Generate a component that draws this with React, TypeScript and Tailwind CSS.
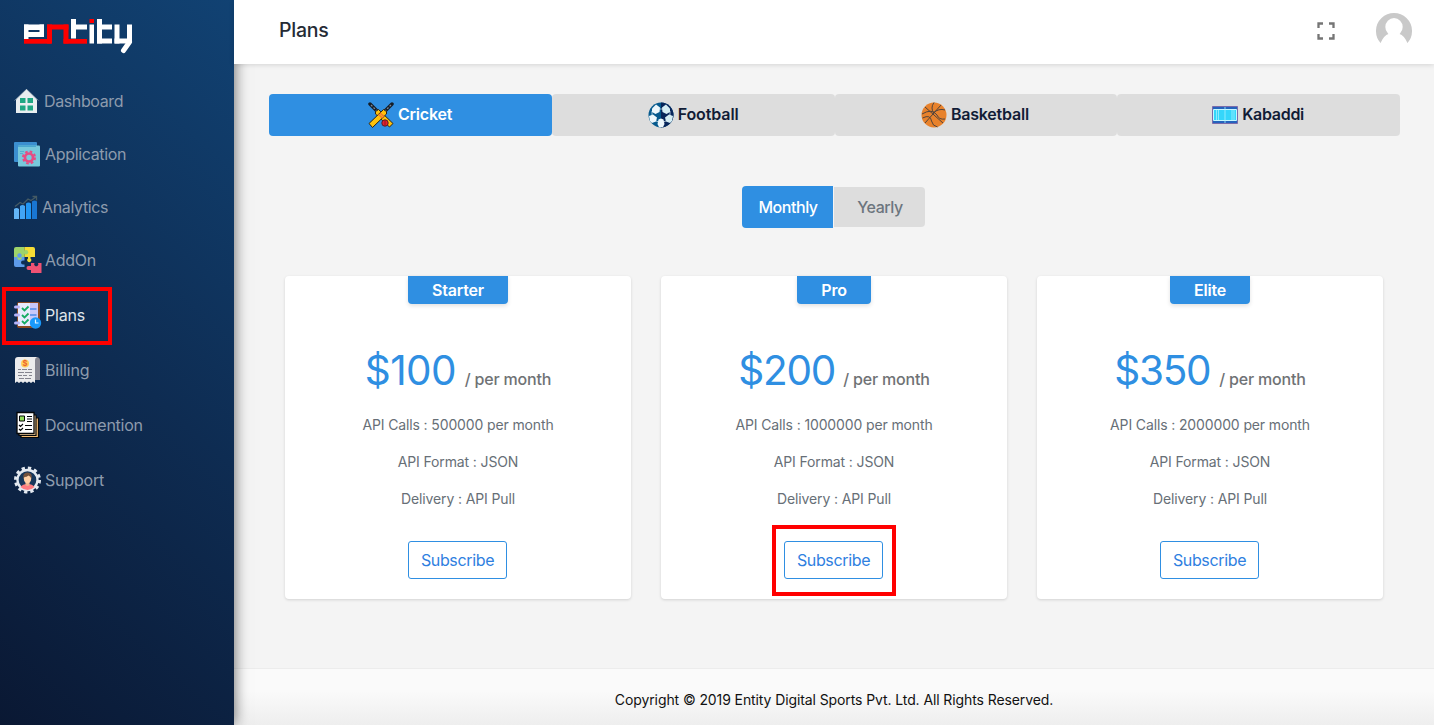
import React from 'react';

function Logo() {
  return (
    <svg width="110" height="36" viewBox="0 0 110 36" role="img" aria-label="entity">
      <g fill="#fff">
        <rect x="0" y="6.500" width="4.500" height="14.500" />
        <rect x="0" y="6.500" width="20" height="5.500" />
        <rect x="15.500" y="6.500" width="4.500" height="12.500" />
        <rect x="4" y="14" width="16" height="5" />
        <rect x="47" y="1" width="5" height="19.500" />
        <rect x="47" y="6.500" width="16" height="5" />
        <rect x="65.500" y="6.500" width="4.500" height="19" />
        <rect x="73" y="1" width="5" height="24.500" />
        <rect x="73" y="6.500" width="15" height="5" />
        <rect x="73" y="20.500" width="15" height="5" />
        <rect x="90.500" y="6.500" width="5" height="19" />
        <rect x="103" y="6.500" width="5" height="18" />
        <rect x="90.500" y="20.500" width="16" height="5" />
      </g>
      <line x1="105.500" y1="24" x2="99.500" y2="32.500" stroke="#fff" strokeWidth="5" strokeLinecap="round" />
      <g fill="#f00">
        <rect x="0" y="21" width="27.500" height="4.700" />
        <rect x="23" y="6.500" width="5" height="19" />
        <rect x="23" y="6.500" width="21.500" height="5" />
        <rect x="39.500" y="6.500" width="5" height="19" />
        <rect x="39.500" y="21" width="23.500" height="4.700" />
        <rect x="65.500" y="1" width="4.500" height="4" />
      </g>
    </svg>
  );
}

const icons: Record<string, React.ReactNode> = {
  Dashboard: (
    <svg width="25" height="26" viewBox="0 0 25 26">
      <path d="M2 11.500 12.500 1 23 11.500V25H2z" fill="#e9eef0" />
      <path d="M.5 12.500 12.500 1.500l12 11" fill="none" stroke="#a9b8c2" strokeWidth=".6" />
      <path d="M6 10h5.500v5H6zM13.500 10H19v5h-5.500zM6 17.500h5.500v5H6zM13.500 17.500H19v5h-5.500z" fill="#1fa883" />
    </svg>
  ),
  Application: (
    <svg width="26" height="26" viewBox="0 0 26 26">
      <rect x="0" y="1" width="23" height="20" rx="1" fill="#3b8fd0" />
      <rect x="4" y="4.500" width="22" height="21" rx="1" fill="#77c9dc" />
      <path d="M4 5.500a1 1 0 0 1 1-1h16a1 1 0 0 1 1 1V6H4z" fill="#4ba8d0" />
      <path d="M6 10.500h4M6 12.500h3" stroke="#4ba8d0" strokeWidth=".8" />
      <circle cx="15" cy="16.500" r="4" fill="none" stroke="#e64c83" strokeWidth="2.700" />
      <circle cx="15" cy="16.500" r="6" fill="none" stroke="#e64c83" strokeWidth="2" strokeDasharray="2.600 2.110" />
    </svg>
  ),
  Analytics: (
    <svg width="24" height="26" viewBox="0 0 24 26">
      <path d="M0 15q2.500-2 5 0v10H0z" fill="#64b5f6" />
      <path d="M6 12q2.500-2 5 0v13H6z" fill="#42a5f5" />
      <path d="M12 9.500q2.500-2 5 0V25h-5z" fill="#2196f3" />
      <path d="M18 7.500q2.500-2 5 0V25h-5z" fill="#1976d2" />
      <path d="m1 12.500 5-4 3 1.500 5-5 3 1.500L22 3M18.500 2.500h4v4" fill="none" stroke="#455a64" strokeWidth="1.300" />
    </svg>
  ),
  AddOn: (
    <svg width="28" height="28" viewBox="0 0 28 28">
      <path d="M0 11h10.500v3.500H9a2 2 0 1 0 0 4h1.500V21H2a2 2 0 0 1-2-2z" fill="#5e9bea" />
      <path d="M0 3a2 2 0 0 1 2-2h8.500v10H7.500a2.200 2.200 0 1 1-4 0H0z" fill="#9ed36a" />
      <path d="M10.500 1H19a2 2 0 0 1 2 2v8h-4.500v1.500a2 2 0 1 1-2.500 0V11h-3.500z" fill="#f6dd35" />
      <circle cx="12" cy="6.300" r="2.200" fill="#9ed36a" />
      <circle cx="5.500" cy="9.500" r="2.200" fill="#5e9bea" />
      <path d="M17 17h3.500a2.100 2.100 0 1 0 3.500 0h3.500v10H17v-3h-2.500a2 2 0 1 1 0-4H17z" fill="#ef5273" />
    </svg>
  ),
  Plans: (
    <svg width="28" height="28" viewBox="0 0 28 28">
      <rect x="3" y="1" width="23" height="26" rx="2" fill="#8d4b22" />
      <path d="M4 2h20v23H4z" fill="#e8eafd" />
      <path d="M16 2h8v23h-8z" fill="#c8c8fa" />
      <path d="M1.500 6h3M1.500 14h3M1.500 22h3" stroke="#b6b4f8" strokeWidth="3" strokeLinecap="round" />
      <path d="m8 7 2.500 2.500 4-4M8 14l2.500 2.500 4-4M8 20l2.500 2.500 4-4" fill="none" stroke="#16ac63" strokeWidth="1.800" />
      <path d="M16 8h6.500M16 14h6.500" stroke="#4d8bea" strokeWidth="1.400" />
      <circle cx="21.500" cy="22" r="5.700" fill="#1999fa" />
      <path d="M21.500 18.500V22h3" fill="none" stroke="#e1f4ff" strokeWidth="1.200" />
    </svg>
  ),
  Billing: (
    <svg width="28" height="28" viewBox="0 0 28 28">
      <path d="M19 1h3.500A3.500 3.500 0 0 1 26 4.500V24h-5z" fill="#878792" />
      <path d="M1 4a3 3 0 0 1 3-3h19q-2 1-2 3v23l-2-1.500-2 1.500-2-1.500-2 1.500-2-1.500L9 27l-2-1.500L5 27l-2-1.500L1 27z" fill="#ececed" />
      <circle cx="11" cy="7.500" r="4" fill="#ffd15c" />
      <text x="11" y="10" textAnchor="middle" fontFamily="Inter, sans-serif" fontSize="7.500" fontWeight="700" fill="#ec632f">$</text>
      <path d="M4 13.500h3m1 0h5m1 0h4M4 16.500h6m1 0h7M4 19.500h4m1 0h4m2 0h3M5 22.500h5m1 0h6" stroke="#85858f" strokeWidth="1" />
    </svg>
  ),
  Documention: (
    <svg width="28" height="28" viewBox="0 0 28 28">
      <path d="M7 7h17.500v19.500H7z" fill="#f5bd73" stroke="#050708" strokeWidth="1.200" />
      <path d="M5 4h17v20.500H5z" fill="#f6d19d" stroke="#050708" strokeWidth="1.200" />
      <path d="M3 1.500h17v21H3z" fill="#fff" stroke="#050708" strokeWidth="1.300" />
      <path d="M5.500 5h5v5h-5z" fill="#91dc5a" stroke="#050708" />
      <path d="M13 5.500h5M13 8h5M13 10.500h5M11 14.500h7M11 18.500h7M5 14l1.500 1.500L9 13M5 18l1.500 1.500L9 17" fill="none" stroke="#050708" strokeWidth="1.100" />
    </svg>
  ),
  Support: (
    <svg width="28" height="28" viewBox="0 0 28 28">
      <circle cx="13.500" cy="14" r="12" fill="none" stroke="#e4e9f0" strokeWidth="3" strokeDasharray="3.300 2.984" />
      <circle cx="13.500" cy="14" r="10" fill="#17375b" stroke="#e4e9f0" strokeWidth="2.300" />
      <path d="M6.500 21q2-3 7-3t7 3q-3 3-7 3t-7-3z" fill="#ff7c80" />
      <path d="M11.500 15h4v4q-2 2-4 0z" fill="#efb28d" />
      <ellipse cx="13.500" cy="12.500" rx="3.700" ry="5" fill="#ffd0a5" />
      <path d="M9.500 13q-1.500-6.500 4-6.500t4 6.500q-1-3-3-3.500-2 1.500-4 1.500z" fill="#73513c" />
    </svg>
  ),
};

const nav = [
  { name: 'Dashboard', row: 'h-[53px]', text: 'w-[79px] ml-[5px] tracking-[-0.38px]' },
  { name: 'Application', row: 'h-[53px]', text: 'w-[81px] ml-[5px] tracking-[-0.33px]' },
  { name: 'Analytics', row: 'h-[53px]', text: 'w-[66px] ml-[4px] tracking-[-0.35px]' },
  { name: 'AddOn', row: 'h-[54px]', text: 'w-[50px] ml-[3px] tracking-[-0.3px]' },
  { name: 'Plans', row: 'h-[55px]', text: 'w-[39px] ml-[3px] tracking-[-0.2px]' },
  { name: 'Billing', row: 'h-[55px]', text: 'w-[44px] ml-[3px] tracking-[-0.1px]' },
  { name: 'Documention', row: 'h-[55px]', text: 'w-[97px] ml-[3px] tracking-[-0.28px]' },
  { name: 'Support', row: 'h-[55px]', text: 'w-[59px] ml-[3px] tracking-[-0.2px]' },
];

function Sidebar() {
  return (
    <aside className="relative z-10 h-[725px] w-[234px] shrink-0 bg-[linear-gradient(42deg,#0a1833_0%,#0e2c52_50%,#114273_100%)] shadow-[0_0_14px_rgba(0,0,0,0.6)]">
      <div className="h-[74px] pt-[18px] pl-6"><Logo /></div>
      <nav className="relative">
        {nav.map((item) => (
          <a key={item.name} className={`${item.row} flex items-center pl-[14px] text-base whitespace-nowrap ${item.name === 'Plans' ? 'text-[#dfe4ea]' : 'text-[#8d9bad]'}`}>
            {icons[item.name]}
            <span className={item.text}>{item.name}</span>
          </a>
        ))}
        <div className="absolute top-[213px] left-[2px] h-[58px] w-[110px] border-4 border-[#f00]" />
      </nav>
    </aside>
  );
}

const sportIcons: Record<string, React.ReactNode> = {
  Cricket: (
    <svg width="26" height="26" viewBox="0 0 26 26">
      <path d="m2 2 8 8M24 2l-8 8" stroke="#151d27" strokeWidth="3.500" strokeLinecap="round" />
      <path d="m3 3 7 7M23 3l-7 7" stroke="#7c8796" strokeWidth="1.300" strokeDasharray="2 1.500" />
      <path d="M7.500 9.500 10.500 7.500 25 21.500 21.500 25 7.500 12z" fill="#ffc20c" stroke="#2b2318" />
      <path d="M18.500 9.500 15.500 7.500 1 21.500 4.500 25.500 18.500 12z" fill="#ffc20c" stroke="#2b2318" />
      <path d="m10.500 12.500 4 3.500M12 11l4 3.500" stroke="#f47732" strokeWidth="1.600" />
      <circle cx="17" cy="21" r="3.200" fill="#e9202c" stroke="#53212c" />
      <path d="M17 18v6" stroke="#8f1827" />
    </svg>
  ),
  Football: (
    <svg width="26" height="26" viewBox="0 0 26 26">
      <circle cx="13" cy="13" r="12.500" fill="#065a8e" />
      <path d="M13 .5a12.500 12.500 0 0 1 0 25z" fill="#08265b" />
      <path d="M4 6.500 8 2.500l4 3-.5 4.500-4 2L4 10z" fill="#edf7fc" />
      <path d="m22 6.500-4-4-4 3 .5 4.500 4 2L22 10z" fill="#d5edf4" />
      <path d="m1 14 4-1.500 4 3-1 4-4 1.500-2-2z" fill="#edf7fc" />
      <path d="m25 14-4-1.500-4 3 1 4 4 1.500 2-2z" fill="#d5edf4" />
      <path d="m10.500 17.500 2.500-1 2.500 1 1 4.500-1.500 3.300h-4L9.500 22z" fill="#edf7fc" />
      <path d="m8 19 3 1M18 19l-3 1M11 7h4M4 9v5M22 9v5" stroke="#e2f2f8" strokeWidth=".7" />
    </svg>
  ),
  Basketball: (
    <svg width="26" height="26" viewBox="0 0 26 26">
      <circle cx="13" cy="13" r="12.500" fill="#e8822c" />
      <path d="M4 5 22 21M13 .5Q9 6 13 11.500M4 21 20 3M1 12q10-6 15 1 2 5 8 4M1.500 16q8-4 9 3 1 5 6 6M12 11q6-5 12-3" fill="none" stroke="#52443d" strokeWidth="1" />
    </svg>
  ),
  Kabaddi: (
    <svg width="26" height="18" viewBox="0 0 26 18">
      <path d="M.5.5h25v17H.5z" fill="#2463bd" stroke="#77549c" strokeWidth=".7" />
      <path d="M1.500 3.500h23v11h-23z" fill="#35d6fa" stroke="#c5f8ff" />
      <path d="M4.500 4v10m2-10v10M13 1v16M20 4v10m2-10v10" stroke="#a4f1ff" strokeWidth=".8" />
    </svg>
  ),
};

const sports = [
  { name: 'Cricket', label: 'w-[55px]' },
  { name: 'Football', label: 'w-[61px] tracking-[-0.1px]' },
  { name: 'Basketball', label: 'w-[80px]' },
  { name: 'Kabaddi', label: 'w-[63px] tracking-[-0.3px]' },
];

const plans = [
  { name: 'Starter', price: '$100', calls: '500000', badge: 'w-[100px]', figure: 'w-[91px] tracking-[-0.6px]' },
  { name: 'Pro', price: '$200', calls: '1000000', badge: 'w-[74px]', figure: 'w-[96px] tracking-[-1.3px]' },
  { name: 'Elite', price: '$350', calls: '2000000', badge: 'w-[80px]', figure: 'w-[96px] tracking-[-1.3px]' },
];

function PlanCard({ plan }: { plan: (typeof plans)[number] }) {
  return (
    <section className="flex h-[323px] w-[346px] flex-col items-center rounded bg-white shadow-[0_1px_3px_rgba(0,0,0,0.14)]">
      <h2 className={`${plan.badge} h-7 rounded-b bg-[#2f8fe2] text-center text-base leading-[28px] font-semibold tracking-[-0.2px] text-white shadow-[0_2px_4px_rgba(0,0,0,0.12)]`}>{plan.name}</h2>
      <div className="mt-[40px] flex h-[53px] items-baseline whitespace-nowrap">
        <span className={`${plan.figure} text-[40.500px] leading-[53px] text-[#2f8fe2]`}>{plan.price}</span>
        <span className="ml-[9px] text-base font-medium tracking-[-0.2px] text-[#6f7275]">/ per month</span>
      </div>
      <div className="mt-[9px] text-center text-sm leading-[37px] tracking-[-0.13px] text-[#676f77]">
        <p>API Calls : {plan.calls} per month</p>
        <p>API Format : JSON</p>
        <p>Delivery : API Pull</p>
      </div>
      <div className="relative mt-6 mr-px">
        <button className="h-[38px] w-[99px] rounded-[3px] border border-[#2f8fe2] text-base tracking-[-0.35px] text-[#2f80df]">Subscribe</button>
        {plan.name === 'Pro' && <div className="absolute -top-4 -left-3 h-[71px] w-[124px] border-4 border-[#f00]" />}
      </div>
    </section>
  );
}

export default function App() {
  return (
    <div className="flex h-[725px] w-[1434px] overflow-hidden bg-[#f4f4f4] font-['Inter','Liberation_Sans',sans-serif]">
      <Sidebar />
      <div className="flex w-[1200px] flex-col">
        <header className="relative z-20 flex h-16 items-center bg-white pr-[22px] pl-[45px] shadow-[0_1px_5px_rgba(0,0,0,0.13)]">
          <h1 className="mb-[3px] text-[19.500px] font-medium tracking-[-0.25px] text-[#252b35]">Plans</h1>
          <svg className="mb-[2px] ml-auto" width="18" height="18" viewBox="0 0 18 18"><path d="M1.500 6V1.500H6M12 1.500h4.500V6M16.500 12v4.500H12M6 16.500H1.500V12" fill="none" stroke="#757575" strokeWidth="2.300" /></svg>
          <svg className="mb-[2px] ml-[41px]" width="36" height="36" viewBox="0 0 36 36">
            <path d="M4.500 30A18 18 0 1 1 31.500 30L27 24H9z" fill="#c9c9c9" />
            <ellipse cx="18" cy="14" rx="8.700" ry="9" fill="#fff" />
            <path d="M4.500 31q2-8 9-10.500h9q7 2.500 9 10.500-6 5-13.500 5T4.500 31z" fill="#fff" />
          </svg>
        </header>
        <main className="h-[604px] pt-[30px] pl-[35px]">
          <div className="flex h-[42px] w-[1131px]">
            {sports.map((sport) => (
              <button key={sport.name} className={`flex flex-1 items-center justify-center gap-1 rounded text-base font-semibold tracking-[-0.2px] whitespace-nowrap ${sport.name === 'Cricket' ? 'bg-[#2f8fe2] text-white' : 'bg-[#ddd] text-[#111c36]'}`}>
                {sportIcons[sport.name]}<span className={`${sport.label} mb-[2px] text-left`}>{sport.name}</span>
              </button>
            ))}
          </div>
          <div className="mt-[50px] ml-[473px] flex h-[42px] w-[183px] items-center gap-px text-base font-medium tracking-[-0.45px]">
            <button className="h-[42px] w-[91px] rounded-l bg-[#2f8fe2] pl-px text-white">Monthly</button>
            <button className="h-10 w-[91px] rounded-r bg-[#ddd] pl-px text-[#6c757d]">Yearly</button>
          </div>
          <div className="mt-12 ml-4 flex gap-[30px]">{plans.map((plan) => <PlanCard key={plan.name} plan={plan} />)}</div>
        </main>
        <footer className="flex h-[57px] items-center justify-center border-t border-[#ececec] bg-[linear-gradient(#fafafa_40%,#eeeeee)] pt-[6px] text-sm tracking-[-0.1px] text-[#111]">Copyright © 2019 Entity Digital Sports Pvt. Ltd. All Rights Reserved.</footer>
      </div>
    </div>
  );
}
